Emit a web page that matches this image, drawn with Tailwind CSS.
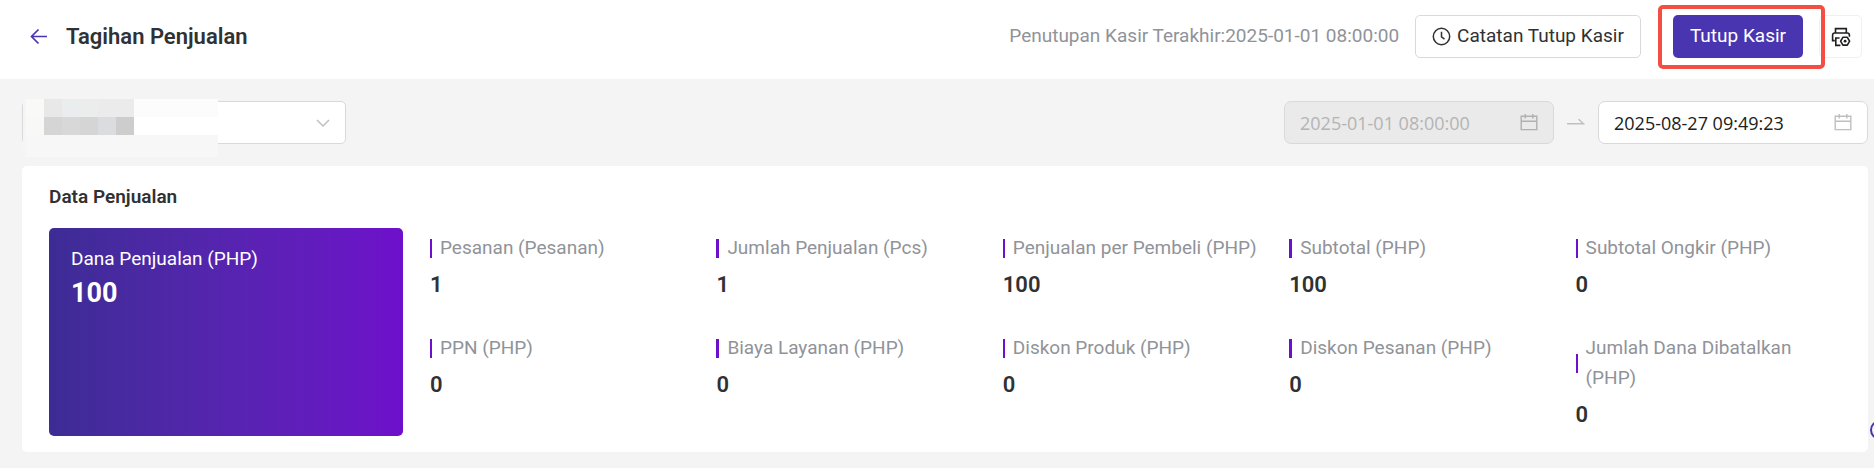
<!DOCTYPE html>
<html lang="id">
<head>
    <meta charset="UTF-8">
    <meta name="viewport" content="width=device-width, initial-scale=1.0">
    <title>Tagihan Penjualan</title>
    <script src="https://cdn.jsdelivr.net/npm/@tailwindcss/browser@4"></script>
</head>
<body class="relative min-h-screen overflow-x-hidden bg-[#f4f4f4] font-[Roboto,sans-serif] text-[19px] text-[#303133]">
    <header class="flex items-center justify-between bg-white pt-[15px] pb-[21px] pl-7 pr-3">
        <div class="flex items-center gap-4">
            <a href="#" aria-label="Kembali" class="text-[#4a35b1]">
                <svg class="size-[22px]" viewBox="0 0 22 22" fill="none" stroke="currentColor" stroke-width="1.7">
                    <path d="M19 10.5H3.5M10.5 3.5l-7 7 7 7"/>
                </svg>
            </a>
            <h1 class="text-[22px] leading-[42px] font-semibold">Tagihan Penjualan</h1>
        </div>
        <div class="flex items-center gap-4">
            <span class="text-[#909399]">Penutupan Kasir Terakhir:2025-01-01 08:00:00</span>
            <button type="button" class="flex h-[43px] items-center gap-[6px] rounded-[5px] border border-[#d9d9d9] bg-white px-4">
                <svg class="size-[19px]" viewBox="0 0 19 19" fill="none" stroke="currentColor" stroke-width="1.5">
                    <circle cx="9.5" cy="9.5" r="8.2"/>
                    <path d="M9.5 4.8v5l3 2.4"/>
                </svg>
                Catatan Tutup Kasir
            </button>
            <div class="relative ml-4">
                <button type="button" class="h-[43px] rounded-[5px] bg-[#4a35b1] px-[17px] text-white">Tutup Kasir</button>
                <div class="pointer-events-none absolute -top-[10px] -right-[22px] -bottom-[11px] -left-[15px] z-10 rounded-[5px] border-4 border-[#f24e42]"></div>
            </div>
            <button type="button" aria-label="Cetak" class="flex size-[43px] items-center justify-center rounded-[5px] border border-[#f0f0f0] bg-white text-[#202020]">
                <svg class="size-5" viewBox="0 0 20 20" fill="none" stroke="currentColor" stroke-width="1.6">
                    <path d="M4.5 6V1.6h10.8V6"/>
                    <path d="M3.8 13.6H1.6V8.2Q1.6 6 3.8 6h12.4q2.2 0 2.2 2.2v1.6"/>
                    <path d="M8.6 11H4.8v7.4h4.6"/>
                    <path d="M11.9 10.3h4.4l2.3 3.9-2.3 3.9h-4.4l-2.3-3.9z" stroke-linejoin="round"/>
                    <circle cx="14.1" cy="14.2" r="1.4" fill="currentColor" stroke="none"/>
                </svg>
            </button>
        </div>
    </header>

    <main class="pt-[22px] pr-[6px] pb-4 pl-[22px]">
        <div class="flex items-center justify-between">
            <div class="relative">
                <select aria-label="Toko" class="block h-[43px] w-[324px] appearance-none rounded-[5px] border border-[#d9d9d9] bg-white px-4">
                    <option></option>
                </select>
                <svg class="pointer-events-none absolute top-[14px] right-[15px] size-4" viewBox="0 0 16 16" fill="none" stroke="#bfbfbf" stroke-width="1.5">
                    <path d="M2 5l6 6 6-6"/>
                </svg>
                <!-- masked store name -->
                <div aria-hidden="true" class="pointer-events-none absolute -top-[2px] left-px grid w-[195px] grid-cols-[3px_18px_18px_18px_18px_18px_18px_1fr] grid-rows-[18px_18px_22px]">
                    <i class="row-span-3 bg-[#f5f5f5]"></i>
                    <i class="bg-[#f9f9f7]"></i>
                    <i class="bg-[#e8e8e8]"></i>
                    <i class="bg-[#eaeded]"></i>
                    <i class="bg-[#ebecec]"></i>
                    <i class="bg-[#ebebeb]"></i>
                    <i class="bg-[#ebebeb]"></i>
                    <i class="bg-[#fcfcfc]"></i>
                    <i class="bg-[#f8f8f6]"></i>
                    <i class="bg-[#d5d5d5]"></i>
                    <i class="bg-[#d8d8d8]"></i>
                    <i class="bg-[#d5d5d5]"></i>
                    <i class="bg-[#dadcdf]"></i>
                    <i class="bg-[#cdcdcd]"></i>
                    <i class="bg-white"></i>
                    <i class="col-span-7 bg-[#f7f7f7]"></i>
                </div>
            </div>
            <div class="flex items-center gap-[13px]">
                <div class="relative">
                    <input type="text" aria-label="Waktu mulai" value="2025-01-01 08:00:00" disabled class="block h-[43px] w-[270px] rounded-[7px] border border-[#d9d9d9] bg-[#eaeaea] px-[15px] font-['Open_Sans',sans-serif] text-[18px] text-[#b4b4b4]">
                    <svg class="pointer-events-none absolute top-3 right-4 size-[18px]" viewBox="0 0 18 18" fill="none" stroke="#b0b0b0" stroke-width="1.4">
                        <path d="M1.2 3.2h15.6v13.4H1.2zM1.2 8.2h15.6M5.2 1v4.4M12.8 1v4.4"/>
                    </svg>
                </div>
                <svg class="size-[18px]" viewBox="0 0 18 18" fill="none" stroke="#bfbfbf" stroke-width="1.5">
                    <path d="M0 9.8h16.4L11.6 5.2"/>
                </svg>
                <div class="relative">
                    <input type="text" aria-label="Waktu selesai" value="2025-08-27 09:49:23" class="block h-[43px] w-[270px] rounded-[7px] border border-[#d9d9d9] bg-white px-[15px] font-['Open_Sans',sans-serif] text-[18px] text-[#202020]">
                    <svg class="pointer-events-none absolute top-3 right-4 size-[18px]" viewBox="0 0 18 18" fill="none" stroke="#bfbfbf" stroke-width="1.4">
                        <path d="M1.2 3.2h15.6v13.4H1.2zM1.2 8.2h15.6M5.2 1v4.4M12.8 1v4.4"/>
                    </svg>
                </div>
            </div>
        </div>

        <section class="mt-[22px] rounded-[5px] bg-white pt-4 pr-[6px] pb-4 pl-[27px]">
            <h2 class="leading-[30px] font-semibold">Data Penjualan</h2>
            <div class="mt-4 flex gap-[27px]">
                <div class="w-[354px] shrink-0 rounded-[5px] bg-linear-to-r from-[#3d2c95] to-[#6e0fcb] px-[22px] pt-4 text-white">
                    <p class="leading-[30px]">Dana Penjualan (PHP)</p>
                    <p class="text-[27px] leading-[38px] font-bold">100</p>
                </div>
                <dl class="grid flex-1 grid-cols-5 content-start gap-y-[33px] pt-[5px] pb-[6px] leading-[30px]">
                    <div class="pr-6">
                        <dt class="flex items-center gap-2 text-[#909399]"><span class="h-[19px] w-[2px] shrink-0 bg-[#6e0fcb]"></span>Pesanan (Pesanan)</dt>
                        <dd class="mt-[7px] text-[22px] font-semibold">1</dd>
                    </div>
                    <div class="pr-6">
                        <dt class="flex items-center gap-2 text-[#909399]"><span class="h-[19px] w-[3px] shrink-0 bg-[#6e0fcb]"></span>Jumlah Penjualan (Pcs)</dt>
                        <dd class="mt-[7px] text-[22px] font-semibold">1</dd>
                    </div>
                    <div class="pr-6">
                        <dt class="flex items-center gap-2 text-[#909399]"><span class="h-[19px] w-[2px] shrink-0 bg-[#6e0fcb]"></span>Penjualan per Pembeli (PHP)</dt>
                        <dd class="mt-[7px] text-[22px] font-semibold">100</dd>
                    </div>
                    <div class="pr-6">
                        <dt class="flex items-center gap-2 text-[#909399]"><span class="h-[19px] w-[3px] shrink-0 bg-[#6e0fcb]"></span>Subtotal (PHP)</dt>
                        <dd class="mt-[7px] text-[22px] font-semibold">100</dd>
                    </div>
                    <div class="pr-6">
                        <dt class="flex items-center gap-2 text-[#909399]"><span class="h-[19px] w-[2px] shrink-0 bg-[#6e0fcb]"></span>Subtotal Ongkir (PHP)</dt>
                        <dd class="mt-[7px] text-[22px] font-semibold">0</dd>
                    </div>
                    <div class="pr-6">
                        <dt class="flex items-center gap-2 text-[#909399]"><span class="h-[19px] w-[2px] shrink-0 bg-[#6e0fcb]"></span>PPN (PHP)</dt>
                        <dd class="mt-[7px] text-[22px] font-semibold">0</dd>
                    </div>
                    <div class="pr-6">
                        <dt class="flex items-center gap-2 text-[#909399]"><span class="h-[19px] w-[3px] shrink-0 bg-[#6e0fcb]"></span>Biaya Layanan (PHP)</dt>
                        <dd class="mt-[7px] text-[22px] font-semibold">0</dd>
                    </div>
                    <div class="pr-6">
                        <dt class="flex items-center gap-2 text-[#909399]"><span class="h-[19px] w-[2px] shrink-0 bg-[#6e0fcb]"></span>Diskon Produk (PHP)</dt>
                        <dd class="mt-[7px] text-[22px] font-semibold">0</dd>
                    </div>
                    <div class="pr-6">
                        <dt class="flex items-center gap-2 text-[#909399]"><span class="h-[19px] w-[3px] shrink-0 bg-[#6e0fcb]"></span>Diskon Pesanan (PHP)</dt>
                        <dd class="mt-[7px] text-[22px] font-semibold">0</dd>
                    </div>
                    <div class="pr-6">
                        <dt class="flex items-center gap-2 text-[#909399]"><span class="h-[19px] w-[2px] shrink-0 bg-[#6e0fcb]"></span>Jumlah Dana Dibatalkan (PHP)</dt>
                        <dd class="mt-[7px] text-[22px] font-semibold">0</dd>
                    </div>
                </dl>
            </div>
        </section>
    </main>

    <!-- help bubble tucked into the right edge -->
    <button type="button" aria-label="Bantuan" class="fixed -right-4 bottom-7 size-5 rounded-full border-2 border-[#4a35b1]"></button>
</body>
</html>
